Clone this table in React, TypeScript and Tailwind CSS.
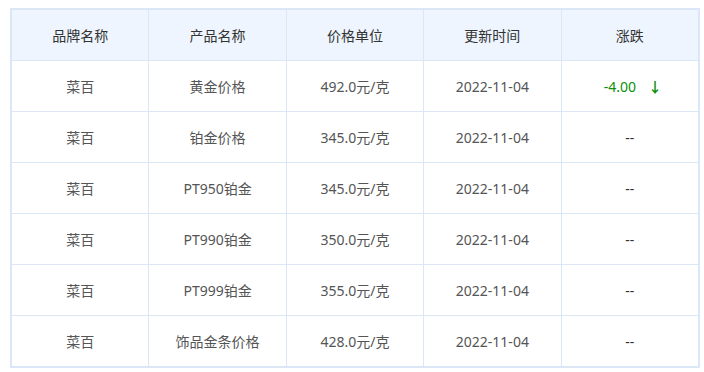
import React from 'react';

const rows = [
  { brand: '菜百', name: '黄金价格', price: '492.0元/克', date: '2022-11-04', change: '-4.00' },
  { brand: '菜百', name: '铂金价格', price: '345.0元/克', date: '2022-11-04', change: '' },
  { brand: '菜百', name: 'PT950铂金', price: '345.0元/克', date: '2022-11-04', change: '' },
  { brand: '菜百', name: 'PT990铂金', price: '350.0元/克', date: '2022-11-04', change: '' },
  { brand: '菜百', name: 'PT999铂金', price: '355.0元/克', date: '2022-11-04', change: '' },
  { brand: '菜百', name: '饰品金条价格', price: '428.0元/克', date: '2022-11-04', change: '' },
];

const headers = ['品牌名称', '产品名称', '价格单位', '更新时间', '涨跌'];

export default function App() {
  return (
    <div className="w-[704px] h-[372px] bg-white pt-2 pl-[10px]" style={{ fontFamily: '"Noto Sans", "Noto Sans CJK SC", sans-serif' }}>
      <div className="w-[690px] border border-[#dbe7f7]">
        <table className="w-full border-collapse table-fixed text-[14px]">
          <thead>
            <tr className="bg-[#eef5fe] h-[51px]">
              {headers.map((h) => (
                <th key={h} className="border border-[#dbe7f7] font-normal text-[#333] text-center">
                  {h}
                </th>
              ))}
            </tr>
          </thead>
          <tbody>
            {rows.map((r, i) => (
              <tr key={i} className="h-[51px] text-[#555]">
                <td className="border border-[#dbe7f7] text-center">{r.brand}</td>
                <td className="border border-[#dbe7f7] text-center">{r.name}</td>
                <td className="border border-[#dbe7f7] text-center">{r.price}</td>
                <td className="border border-[#dbe7f7] text-center">{r.date}</td>
                <td className="border border-[#dbe7f7] text-center">
                  {r.change ? (
                    <span className="text-[#0a8f0a] pl-[6px]">
                      {r.change}
                      <span className="ml-[12px] font-bold">↓</span>
                    </span>
                  ) : (
                    <span className="text-[#333]">--</span>
                  )}
                </td>
              </tr>
            ))}
          </tbody>
        </table>
      </div>
    </div>
  );
}
